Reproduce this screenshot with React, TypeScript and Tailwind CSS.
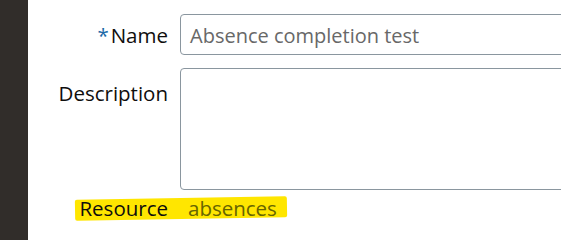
import React from "react";

export default function App() {
  return (
    <div
      className="flex h-[240px] w-[561px] overflow-hidden bg-white"
      style={{ fontFamily: '"Open Sans", "Noto Sans", sans-serif' }}
    >
      <div className="w-[28px] shrink-0 bg-[#312d2a]" />
      <div className="relative flex-1 pt-[14px]">
        <div className="grid grid-cols-[140px_1fr] gap-x-[12px]">
          {/* Name */}
          <div className="flex h-[41px] items-center justify-end pt-[2px] text-[20.5px] text-[#0f0e0d]">
            <span className="mr-[2px] text-[#1c6aa7]">*</span>
            <span>Name</span>
          </div>
          <div className="flex h-[41px] w-[420px] items-center rounded-[4px] border border-[#8a969f] bg-white pl-[9px] pt-[2px]">
            <span className="text-[20px] text-[#686868]">
              Absence completion test
            </span>
          </div>

          {/* Description */}
          <div className="mt-[13px] flex justify-end pt-[10px] text-[20.5px] text-[#0f0e0d]">
            Description
          </div>
          <div className="mt-[13px] h-[122px] w-[420px] rounded-[4px] border border-[#8a969f] bg-white" />

          {/* Resource */}
          <div className="relative mt-[3px] flex justify-end text-[20.5px] text-[#0f0e0d]">
            <div className="absolute left-[47px] top-[5px] h-[21px] w-[212px] -rotate-[1deg] rounded-[2px] bg-[#ffe600]" />
            <span className="relative">Resource</span>
          </div>
          <div className="relative mt-[3px] pl-[8px] text-[20.5px] text-[#676400]">
            absences
          </div>
        </div>
      </div>
    </div>
  );
}
